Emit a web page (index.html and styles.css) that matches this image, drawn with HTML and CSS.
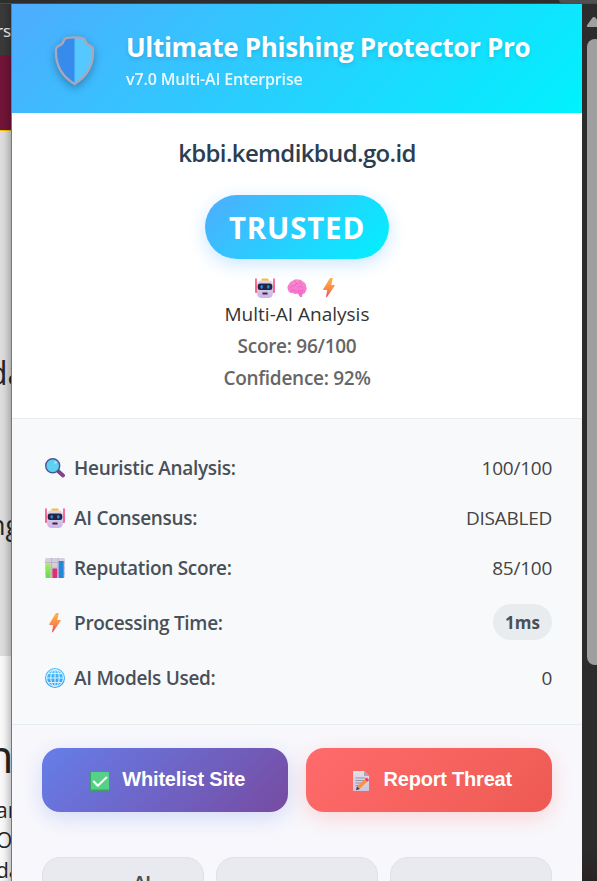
FILE: index.html
```
<!DOCTYPE html>
<html lang="en">
<head>
<meta charset="utf-8">
<title>Ultimate Phishing Protector Pro</title>
<link rel="stylesheet" href="styles.css">
</head>
<body>
<svg class="defs" width="0" height="0">
  <defs>
    <linearGradient id="gBolt" x1="0" y1="0" x2="0" y2="1"><stop offset="0" stop-color="#ffb54a"/><stop offset=".55" stop-color="#fb8a45"/><stop offset="1" stop-color="#f2416b"/></linearGradient>
    <linearGradient id="gFace" x1="0" y1="0" x2="0" y2="1"><stop offset="0" stop-color="#ded9e6"/><stop offset="1" stop-color="#cdb4e6"/></linearGradient>
    <linearGradient id="gBrain" x1="0" y1="0" x2="0" y2="1"><stop offset="0" stop-color="#f98bd0"/><stop offset="1" stop-color="#f66fd0"/></linearGradient>
    <linearGradient id="gGlobe" x1="0" y1="0" x2="0" y2="1"><stop offset="0" stop-color="#4cc3fa"/><stop offset="1" stop-color="#2f9df0"/></linearGradient>
    <linearGradient id="gPaper" x1="0" y1="0" x2="0" y2="1"><stop offset="0" stop-color="#e2dfe8"/><stop offset="1" stop-color="#cfc4dc"/></linearGradient>
    <linearGradient id="gGreen" x1="0" y1="0" x2="0" y2="1"><stop offset="0" stop-color="#a6ee62"/><stop offset="1" stop-color="#6fd257"/></linearGradient>
    <symbol id="robot" viewBox="0 0 20 20">
      <path d="M1 1v12M19 1v12" stroke="#f5285f" stroke-width="1.3" stroke-linecap="round"/>
      <rect x="0" y="7" width="3" height="8" rx="1" fill="#f06a96"/><rect x="17" y="7" width="3" height="8" rx="1" fill="#f06a96"/>
      <rect x="6.5" y="0.6" width="7" height="3" rx="1" fill="#ffba2e"/>
      <path d="M5 2.5h10q3 1 3 4v8q0 5.5-5 5.5H7q-5 0-5-5.500v-8q0-3 3-4z" fill="url(#gFace)"/>
      <rect x="2.700" y="5.500" width="14.600" height="6.500" rx="2.500" fill="#26233f"/>
      <ellipse cx="6.700" cy="8.800" rx="1.300" ry="1.900" fill="#208bea"/><ellipse cx="13.300" cy="8.800" rx="1.300" ry="1.900" fill="#208bea"/>
      <rect x="7.400" y="14.600" width="5.200" height="1.900" rx=".4" fill="#34264d"/>
    </symbol>
    <symbol id="brain" viewBox="0 0 20 20">
      <path d="M1 12Q-.5 8 2 6 3 3 6 2.500 8 .8 11 1.500 14 1 16 3.500 19 5 19 8q1.500 3-.3 5.500Q18 16 15.500 16L15 19q-2 .6-3-1.500l-1-2q-3 1.200-5-.5Q2 15.500 1 12z" fill="url(#gBrain)"/>
      <path d="M2.500 10q2-3 5-2 1-3 3.500-2.500M8 3q0 2 2 2.500M13 3q-1 3 2 3.500M11 9q3-2 5 1M4 13q2-2 4-.5M10 14q3-3 6-1M15 15.500q-2-1-3 0" fill="none" stroke="#e45abc" stroke-width=".7" stroke-linecap="round"/>
    </symbol>
    <symbol id="bolt" viewBox="0 0 20 20"><path d="M10.500.7q.3-.7 1-.7h1.700q.8 0 .5.800L12.200 7H15q1.200 0 .5 1L8 19q-1 1-.9-.4L8.200 12H5q-1.200 0-.7-1.100z" fill="url(#gBolt)"/></symbol>
    <symbol id="search" viewBox="0 0 20 20">
      <path d="M13 13l5 4.500" stroke="#82438d" stroke-width="3.800" stroke-linecap="round"/>
      <path d="M12 12l2 2" stroke="#62477f" stroke-width="2"/>
      <circle cx="7.700" cy="7.700" r="7" fill="#5ed0f0" stroke="#49589a" stroke-width="1.400"/>
      <circle cx="10.500" cy="4.500" r="1.300" fill="#a4e7fb"/>
    </symbol>
    <symbol id="chart" viewBox="0 0 20 20">
      <rect width="20" height="20" rx="1.800" fill="#d5cedd"/>
      <path d="M0 4.500h20M0 10h20M0 15h20M6.500 0v20M13 0v20" stroke="#b9afc4" stroke-width=".8"/>
      <rect x="1" y="5.500" width="4.500" height="14.500" fill="url(#gGreen)"/><rect x="7.400" y="10.500" width="4.800" height="9.500" rx=".8" fill="#df2f75"/><rect x="13.700" y="3" width="5" height="17" rx=".6" fill="#2587dc"/>
    </symbol>
    <symbol id="globe" viewBox="0 0 20 20">
      <circle cx="10" cy="10" r="10" fill="url(#gGlobe)"/>
      <g fill="none" stroke="#d5f1ff" stroke-width="1.100"><ellipse cx="10" cy="10" rx="4.200" ry="8.500"/><circle cx="10" cy="10" r="8.400"/><path d="M10 1.500v17M1.500 10h17M3 5.500h14M3 14.500h14"/></g>
    </symbol>
    <symbol id="check" viewBox="0 0 20 20"><rect width="20" height="20" rx="1" fill="#3ba165"/><rect x="1" y="1" width="18" height="17.500" rx=".6" fill="#55d287"/><path d="M3.800 10.500l4 4.200 8.600-8.200" fill="none" stroke="#fff" stroke-width="2" stroke-linecap="round" stroke-linejoin="round"/></symbol>
    <symbol id="memo" viewBox="0 0 20 20">
      <path d="M2 .5q0-.5.500-.5H13l5 5v14.500q0 .5-.5.500h-15q-.5 0-.5-.500z" fill="url(#gPaper)"/><path d="M13 0l5 5h-4.500q-.5 0-.5-.5z" fill="#aaa2b7"/>
      <path d="M4.500 7h10M4.500 9.500h10M4.500 12h7M4.500 14.500h4" stroke="#928ca2" stroke-width=".9"/>
      <path d="M7 17l8-7.500" stroke="#fb923c" stroke-width="3.600"/><path d="M15 9.500l2-1.700" stroke="#f5365d" stroke-width="3.600"/><path d="M5.900 15.500L5 19.300l3.800-1.300z" fill="#49394d"/>
    </symbol>
  </defs>
</svg>
<div class="screen">
  <div class="topbar"><span></span></div>
  <aside class="behind">
    <div class="dark"><span>rso</span></div>
    <div class="maroon"></div>
    <div class="grey"><span class="t1">da</span><span class="t2">ng</span></div>
    <div class="light"><span class="t3">m</span><span class="t4">an</span><span class="t4">Ol</span><span class="t4">da</span></div>
  </aside>
  <main class="popup">
    <header class="header">
      <svg class="shield" viewBox="0 0 40 49">
        <path d="M10.500 2Q20 .2 29.500 2 30 7 34 9q3 1.300 4 3.500Q40.500 36 20 47-.5 36 2 12.500 3 10.300 6 9q4-2 4.500-7z" fill="#368bed"/>
        <path d="M20 1.200Q26 1 29.500 2 30 7 34 9q3 1.300 4 3.500Q40.500 36 20 47z" fill="#55c8ff"/>
        <path d="M12 2Q20 .7 28 2 30 2.400 30.500 4.500 31.500 8 35 9.500q3 1.200 3.200 4Q39 36 20 47 1 36 1.800 13.500 2 10.700 5 9.500 8.500 8 9.500 4.500 10 2.400 12 2z" fill="none" stroke="#aaa6bb" stroke-width="2.300"/>
      </svg>
      <div><h1>Ultimate Phishing Protector Pro</h1><p>v7.0 Multi-AI Enterprise</p></div>
    </header>
    <section class="status">
      <h2>kbbi.kemdikbud.go.id</h2>
      <div class="trust">TRUSTED</div>
      <div class="icons"><svg><use href="#robot"/></svg><svg><use href="#brain"/></svg><svg><use href="#bolt"/></svg></div>
      <p class="multi">Multi-AI Analysis</p>
      <p class="score">Score: 96/100</p>
      <p class="score">Confidence: 92%</p>
    </section>
    <section class="details">
      <div class="row"><svg><use href="#search"/></svg><b>Heuristic Analysis:</b><span>100/100</span></div>
      <div class="row"><svg><use href="#robot"/></svg><b>AI Consensus:</b><span>DISABLED</span></div>
      <div class="row"><svg><use href="#chart"/></svg><b>Reputation Score:</b><span>85/100</span></div>
      <div class="row tall"><svg><use href="#bolt"/></svg><b>Processing Time:</b><span class="pill">1ms</span></div>
      <div class="row"><svg><use href="#globe"/></svg><b>AI Models Used:</b><span>0</span></div>
    </section>
    <section class="actions">
      <div class="buttons">
        <button class="white"><svg><use href="#check"/></svg><span>Whitelist Site</span></button>
        <button class="report"><svg><use href="#memo"/></svg><span>Report Threat</span></button>
      </div>
      <div class="tiles"><div>AI</div><div></div><div></div></div>
    </section>
  </main>
  <div class="scroll"><svg width="15" height="30" viewBox="0 0 15 30"><path d="M6 23q-2 0-.8-2l5-7q1.800-2 3.600 0l5 7v2z" fill="#a0a0a0"/></svg><i></i></div>
</div>
</body>
</html>
```
FILE: styles.css
```
* { box-sizing: border-box; }
body { margin: 0; width: 597px; height: 881px; overflow: hidden; font-family: "Open Sans", "Noto Sans", sans-serif; background: #2c2c2c; }
h1, h2, p { margin: 0; }
svg { flex: none; display: block; }
.defs { position: absolute; }
.screen { display: grid; grid-template-columns: 12px 570px 15px; grid-template-rows: 4px 877px; height: 881px; }
.topbar { grid-column: 1 / -1; background: #2e2e2e; border-bottom: 1px solid #4a4a4a; display: flex; justify-content: flex-end; }
.topbar span { width: 38px; height: 3px; background: #505050; border-bottom-left-radius: 4px; }

.behind { overflow: hidden; display: flex; flex-direction: column; box-shadow: inset -1px 0 #777, inset -9px 0 9px -6px rgba(0,0,0,.3); color: #262626; white-space: nowrap; }
.behind > div { overflow: hidden; flex: none; position: relative; z-index: -1; }
.behind span { display: block; }
.dark { height: 51px; background: #3a3a3a; color: #eee; font: 17px/20px "Noto Sans", sans-serif; padding-top: 17px; }
.dark span { margin-left: -4px; }
.maroon { height: 76px; background: #731539; border-bottom: 1px solid #f4c400; }
.grey { height: 525px; background: #dedede; }
.light { height: 225px; background: #fafafa; }
.t1, .t2 { line-height: 40px; }
.t1 { font-size: 32px; margin: 222px 0 0 -12px; }
.t2 { font-size: 27px; margin: 112px 0 0 -11px; }
.t3 { font-size: 46px; line-height: 60px; margin: 69px 0 10px -29px; }
.t4 { font-size: 21px; line-height: 30px; margin-left: -4px; }

.popup { background: #fff; overflow: hidden; }
.header { height: 109px; padding-left: 42px; display: flex; align-items: center; gap: 31px; color: #fff; background: linear-gradient(135deg, #4facfe, #00f2fe); }
.header > div { padding-top: 4px; }
.shield { width: 41px; height: 50px; margin-top: 5px; filter: drop-shadow(0 3px 4px rgba(0,0,0,.3)); }
h1 { font-size: 26px; line-height: 34px; font-weight: 700; letter-spacing: -.3px; white-space: nowrap; text-shadow: 0 2px 4px rgba(0,0,0,.12); }
.header p { font-size: 16px; line-height: 24px; margin-top: 3px; font-weight: 600; opacity: .9; letter-spacing: -.15px; }

.status { height: 306px; padding-top: 23px; display: flex; flex-direction: column; align-items: center; border-bottom: 1px solid #e9ecef; }
h2 { font-size: 24px; line-height: 34px; font-weight: 600; letter-spacing: -.65px; color: #2c3e50; }
.trust { margin-top: 25px; width: 184px; height: 64px; border-radius: 32px; background: linear-gradient(135deg, #4facfe, #00f2fe); box-shadow: 0 5px 18px rgba(79,172,254,.3); color: #fff; font-size: 29.5px; font-weight: 700; line-height: 66px; text-align: center; letter-spacing: .8px; }
.icons { display: flex; gap: 12px; margin-top: 19px; }
.icons svg { width: 20px; height: 20px; }
.multi { font-size: 19px; line-height: 32px; color: #333; height: 32px; }
.score { font-size: 19px; line-height: 32px; font-weight: 600; color: #666; letter-spacing: -.28px; }

.details { height: 306px; padding: 24px 30px 0 33px; background: #f8f9fb; border-bottom: 1px solid #e9ecef; }
.row { height: 50px; display: flex; align-items: center; font-size: 19px; line-height: 26px; color: #444; letter-spacing: -.25px; }
.row svg { width: 20px; height: 20px; margin-right: 9px; }
.row b { font-weight: 600; color: #495057; margin-right: auto; letter-spacing: -.3px; }
.tall { height: 60px; }
.pill { width: 59px; height: 36px; border-radius: 18px; background: #e9ecef; color: #495057; font-size: 17px; font-weight: 700; line-height: 37px; text-align: center; margin-top: -2px; letter-spacing: 0; }

.actions { height: 200px; padding: 23px 30px 0; background: #f8f8fc; }
.buttons { display: grid; grid-template-columns: 246px 246px; gap: 18px; }
.buttons button { height: 64px; border: 0; border-radius: 18px; color: #fff; display: flex; align-items: center; justify-content: center; font: 700 20px/24px "Liberation Sans", Arial, sans-serif; letter-spacing: -.2px; gap: 12.5px; padding: 0 0 0 5px; }
.buttons svg { width: 20px; height: 20px; margin-top: 2px; }
.buttons span { margin-top: -2px; }
.white { background: linear-gradient(135deg, #667eea, #764ba2); box-shadow: 0 6px 22px rgba(102,126,234,.25); }
.report { background: linear-gradient(135deg, #ff6b6b, #ee5a52); box-shadow: 0 6px 22px rgba(255,107,107,.25); }
.tiles { display: grid; grid-template-columns: repeat(3, 162px); gap: 12px; margin-top: 45px; }
.tiles div { height: 100px; border: 1px solid #dfe1e6; border-radius: 18px; background: #e9eaef; padding: 14px 0 0 38px; text-align: center; font: 700 17px/22px "Liberation Sans", Arial, sans-serif; color: #495057; }

.scroll { background: linear-gradient(#2c2c2c 96%, #2a2324); overflow: hidden; }
.scroll i { display: block; margin: 5px 0 0 5px; width: 16px; height: 626px; border-radius: 8px; background: #9f9f9f; }
```
